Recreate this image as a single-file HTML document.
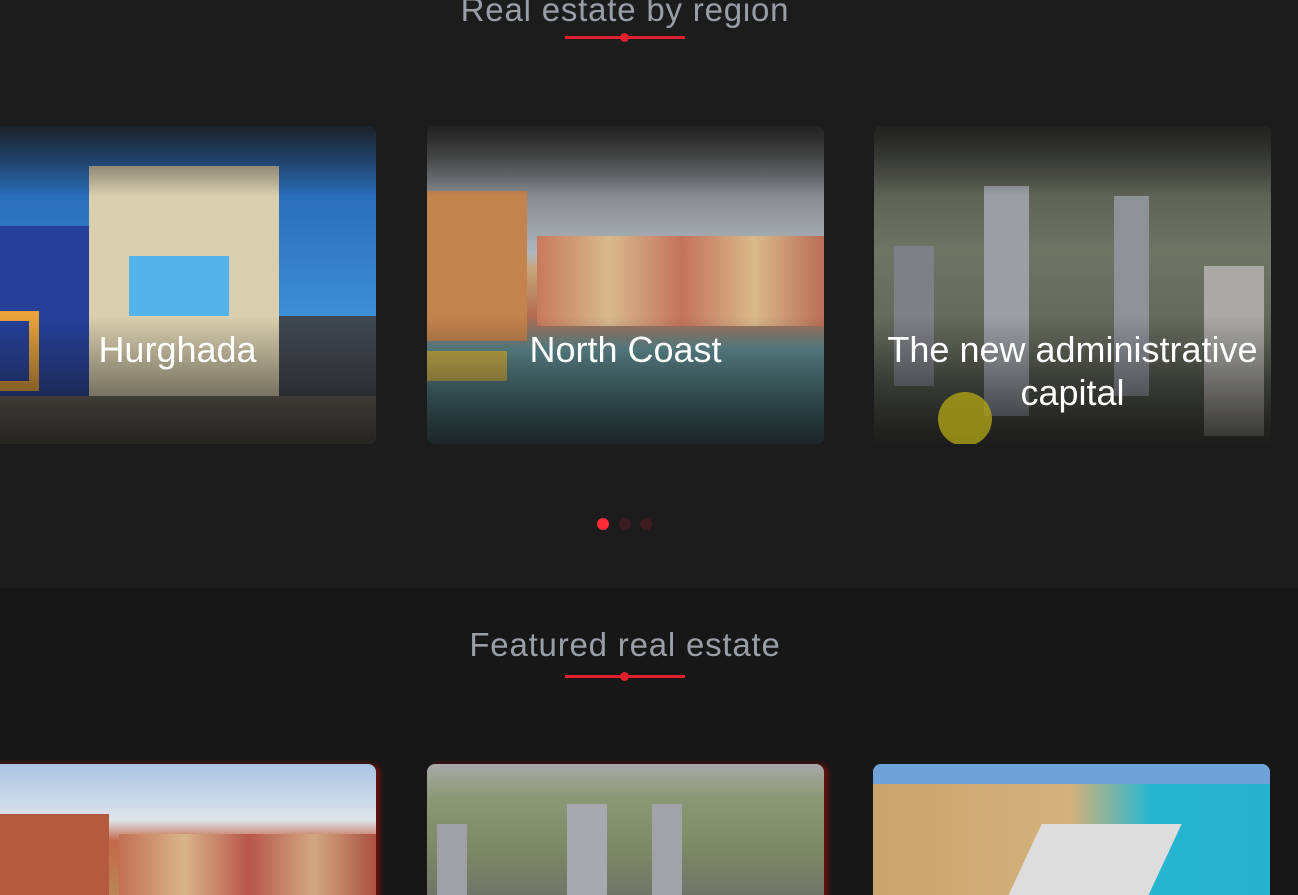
<!DOCTYPE html>
<html><head><meta charset="utf-8"><style>
*{margin:0;padding:0;box-sizing:border-box}
html,body{width:1298px;height:895px;overflow:hidden}
body{background:#1c1c1c;font-family:"Liberation Sans","DejaVu Sans",sans-serif;position:relative}
.sec2{position:absolute;left:0;top:588px;width:1298px;height:307px;background:#171717}
.title{position:absolute;left:0;width:1298px;text-align:center;color:#9a9ea6;font-size:33px;letter-spacing:.8px;transform:translateX(-24px)}
.ul{position:absolute;left:565px;width:120px;height:3px;background:#e0202c}
.ul:after{content:"";position:absolute;left:55px;top:-3px;width:9px;height:9px;border-radius:50%;background:#e0202c}
.card{position:absolute;top:126px;width:397px;height:318px;border-radius:8px;overflow:hidden}
.card .ov{position:absolute;inset:0;background:linear-gradient(to bottom,rgba(28,28,28,.9) 0,rgba(28,28,28,0) 22%,rgba(0,0,0,0) 60%,rgba(20,20,20,.8) 100%)}
.card .lbl{position:absolute;left:0;right:0;top:202px;text-align:center;color:#fff;font-size:36px;line-height:43px}
.dot{position:absolute;top:518px;width:12px;height:12px;border-radius:50%}
.b{position:absolute;top:764px;width:397px;height:140px;border-radius:8px 8px 0 0;overflow:hidden}
</style></head><body>
<div class="sec2"></div>
<div class="title" style="top:-9px">Real estate by region</div>
<div class="ul" style="top:36px"></div>

<div class="card" style="left:-21px;background:linear-gradient(#1f5aa8,#3e8fd6 60%,#8bbbd8)">
 <div style="position:absolute;left:0;top:100px;width:110px;height:220px;background:#26409a"></div>
 <div style="position:absolute;left:0;top:185px;width:60px;height:80px;border:10px solid #e8a23a;border-left:none"></div>
 <div style="position:absolute;left:110px;top:40px;width:190px;height:280px;background:#d9cfae"></div>
 <div style="position:absolute;left:150px;top:130px;width:100px;height:60px;background:#55b3ec"></div>
 <div style="position:absolute;left:300px;top:190px;width:100px;height:130px;background:#404850"></div>
 <div style="position:absolute;left:0;top:270px;width:397px;height:50px;background:#6a6456"></div>
 <div class="ov"></div><div class="lbl">Hurghada</div></div>

<div class="card" style="left:427px;background:linear-gradient(#5a5a5a,#aeb5bd 40%,#c8a67a 45%,#b26a50 60%,#5f8d92 70%,#3d6f78)">
 <div style="position:absolute;left:0;top:65px;width:100px;height:150px;background:#c3834d"></div>
 <div style="position:absolute;left:110px;top:110px;width:290px;height:90px;background:linear-gradient(90deg,#c77a5c,#d8b98d,#c4735c,#d9b98a,#b86a55)"></div>
 <div style="position:absolute;left:0;top:225px;width:80px;height:30px;background:#c9b24a"></div>
 <div class="ov"></div><div class="lbl">North Coast</div></div>

<div class="card" style="left:874px;background:linear-gradient(#4a4d44,#6f7565 40%,#5e6557 70%,#3f4038)">
 <div style="position:absolute;left:110px;top:60px;width:45px;height:230px;background:#9a9fa6"></div>
 <div style="position:absolute;left:240px;top:70px;width:35px;height:200px;background:#8d9299"></div>
 <div style="position:absolute;left:20px;top:120px;width:40px;height:140px;background:#7d8087"></div>
 <div style="position:absolute;left:330px;top:140px;width:60px;height:170px;background:#aaa9a6"></div>
 <div class="ov"></div><div class="lbl">The new administrative<br>capital</div>
 <div style="position:absolute;left:64px;top:266px;width:54px;height:54px;border-radius:50%;background:rgba(180,170,20,.75)"></div></div>

<div class="dot" style="left:597px;background:#ff2b36"></div>
<div class="dot" style="left:619px;background:#3a1d20"></div>
<div class="dot" style="left:640px;background:#3e1c20"></div>

<div class="title" style="top:626px">Featured real estate</div>
<div class="ul" style="top:675px"></div>

<div class="b" style="left:-21px;background:linear-gradient(#a9c4e4,#dfe4ea 40%,#c4694a 55%,#b98859);box-shadow:4px 0 6px #6b1010">
 <div style="position:absolute;left:20px;top:50px;width:110px;height:100px;background:#b45a3e"></div>
 <div style="position:absolute;left:140px;top:70px;width:260px;height:80px;background:linear-gradient(90deg,#c27054,#d9b48a,#b8564a,#d2a882,#a84c3c)"></div></div>
<div class="b" style="left:427px;background:linear-gradient(#a8a9a8,#8b9875 25%,#7c8a66 60%,#6f7068);box-shadow:4px 0 6px #6b1010">
 <div style="position:absolute;left:10px;top:60px;width:30px;height:90px;background:#9ea0a6"></div>
 <div style="position:absolute;left:140px;top:40px;width:40px;height:110px;background:#a7a9ae"></div>
 <div style="position:absolute;left:225px;top:40px;width:30px;height:110px;background:#a0a3a7"></div></div>
<div class="b" style="left:873px;background:linear-gradient(90deg,#c9a46c 0,#d3b27c 50%,#26b6cf 70%,#26b2cf)">
 <div style="position:absolute;left:0;top:0;width:397px;height:20px;background:#6ea2d8"></div>
 <div style="position:absolute;left:150px;top:60px;width:140px;height:80px;background:#ddd;transform:skewX(-25deg)"></div></div>
</body></html>
